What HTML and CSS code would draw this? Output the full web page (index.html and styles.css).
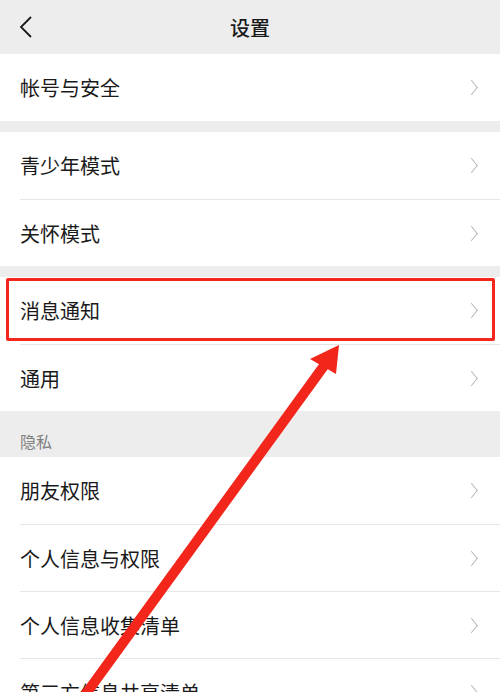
FILE: index.html
```html
<!DOCTYPE html>
<html lang="zh-CN">
<head>
    <meta charset="UTF-8">
    <meta name="viewport" content="width=device-width, initial-scale=1.0">
    <title>设置</title>
    <link rel="stylesheet" href="styles.css">
</head>
<body>
    <div class="page">
        <header class="topbar">
            <span class="back">
                <svg width="14" height="24" viewBox="0 0 14 24"><path d="M12 2 L2 12 L12 22" fill="none" stroke="#1a1a1a" stroke-width="1.8"/></svg>
            </span>
            <h1>设置</h1>
        </header>

        <div class="group">
            <div class="cell"><span>帐号与安全</span><i class="chev"></i></div>
        </div>

        <div class="group">
            <div class="cell"><span>青少年模式</span><i class="chev"></i></div>
            <div class="cell"><span>关怀模式</span><i class="chev"></i></div>
        </div>

        <div class="group">
            <div class="cell highlight"><span>消息通知</span><i class="chev"></i></div>
            <div class="cell"><span>通用</span><i class="chev"></i></div>
        </div>

        <div class="section-title">隐私</div>
        <div class="group flush">
            <div class="cell"><span>朋友权限</span><i class="chev"></i></div>
            <div class="cell"><span>个人信息与权限</span><i class="chev"></i></div>
            <div class="cell"><span>个人信息收集清单</span><i class="chev"></i></div>
            <div class="cell"><span>第三方信息共享清单</span><i class="chev"></i></div>
        </div>

        <!-- annotation arrow drawn over the list -->
        <svg class="arrow" width="500" height="692" viewBox="0 0 500 692">
            <line x1="80" y1="702" x2="326" y2="363" stroke="#f2261b" stroke-width="10"/>
            <polygon points="339,345 310,359 336,374" fill="#f2261b"/>
        </svg>
    </div>
</body>
</html>
```

FILE: styles.css
```css
/* Base */
body {
    margin: 0;
    font-family: "Noto Sans CJK SC", "Noto Sans", sans-serif;
    color: #1a1a1a;
    background-color: #ededed;
}

.page {
    position: relative;
    width: 500px;
    height: 692px;
    overflow: hidden;
}

/* Top bar */
.topbar {
    height: 54px;
    display: flex;
    align-items: center;
    justify-content: center;
    position: relative;
}

.topbar h1 {
    margin: 0;
    font-size: 20px;
    font-weight: 500;
}

.back {
    position: absolute;
    left: 19px;
    top: 15px;
    display: flex;
}

/* List groups */
.group {
    background-color: #fff;
    margin-bottom: 11px;
}

.group.flush {
    margin-bottom: 0;
}

.cell {
    height: 67px;
    margin-left: 20px;
    padding-right: 22px;
    display: flex;
    align-items: center;
    justify-content: space-between;
    font-size: 20px;
    box-sizing: border-box;
    position: relative;
}

.cell + .cell {
    border-top: 1px solid #e6e6e6;
}

.chev {
    width: 10px;
    height: 10px;
    border-top: 1.4px solid #b4b4b4;
    border-right: 1.4px solid #b4b4b4;
    transform: scaleX(0.8) rotate(45deg);
    margin-right: 1px;
}

/* Red highlight box */
.highlight::after {
    content: "";
    position: absolute;
    left: -14px;
    right: 5px;
    top: 1px;
    bottom: 3px;
    border: 3px solid #f2261b;
    border-radius: 2px;
}

.section-title {
    height: 46px;
    margin-top: -11px;
    padding: 18px 20px 0;
    box-sizing: border-box;
    font-size: 16px;
    color: #808080;
}

.arrow {
    position: absolute;
    left: 0;
    top: 0;
}
```
